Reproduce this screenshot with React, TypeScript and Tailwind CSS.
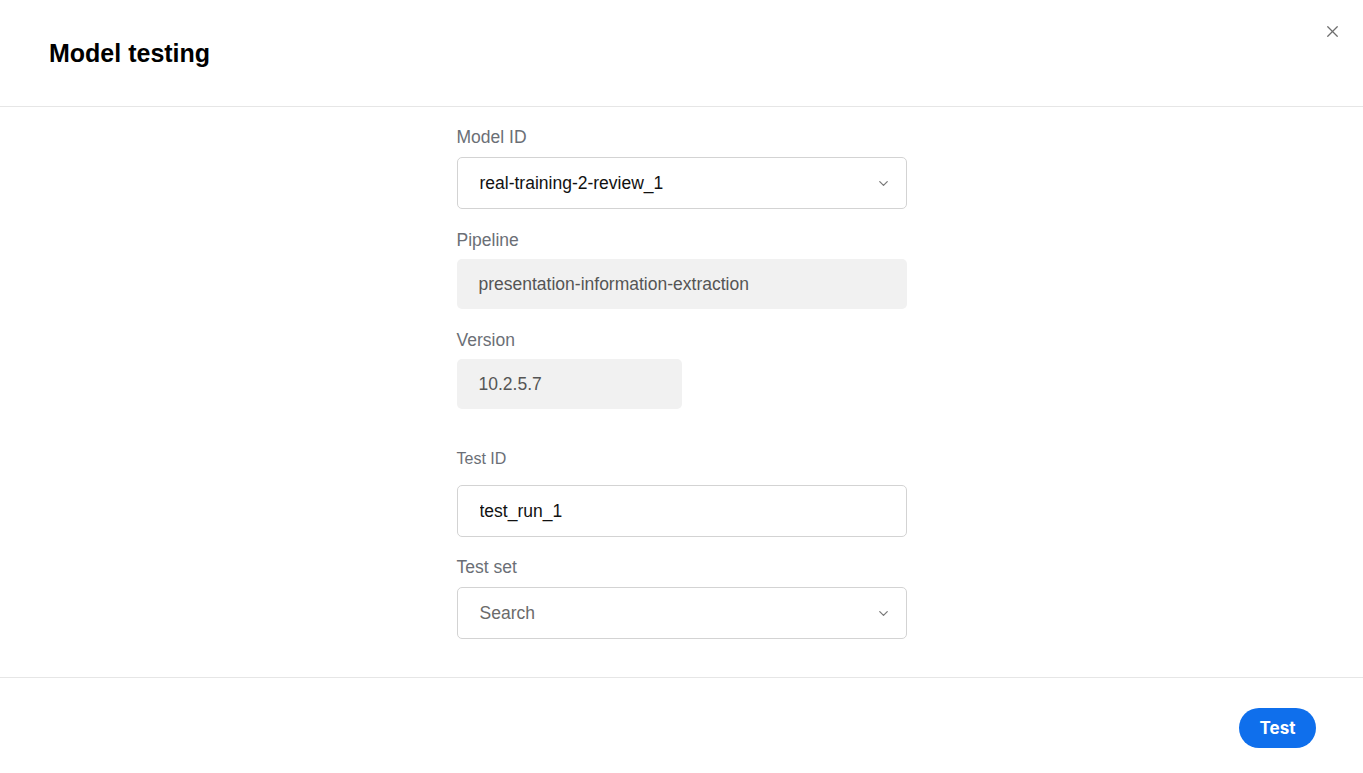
import React, { useState } from 'react';
import { X, ChevronDown } from 'lucide-react';

const font = { fontFamily: '"Liberation Sans", Arial, sans-serif' };

function FieldLabel({ children, small }: { children: React.ReactNode; small?: boolean }) {
  return (
    <div className={`${small ? 'text-[16px]' : 'text-[17.5px]'} leading-[20px] text-[#6b6f76]`}>{children}</div>
  );
}

function SelectBox({ value, placeholder }: { value?: string; placeholder?: string }) {
  return (
    <div className="flex h-[52px] w-full items-center justify-between rounded-[5px] border border-[#d3d3d3] bg-white pl-[22px] pr-[15px]">
      {value ? (
        <span className="text-[17.5px] text-[#111]">{value}</span>
      ) : (
        <span className="text-[17.5px] text-[#6b6b6b]">{placeholder}</span>
      )}
      <ChevronDown className="h-[15px] w-[15px] text-[#7a7a7a]" strokeWidth={2} />
    </div>
  );
}

function ReadOnlyBox({ value, className = '' }: { value: string; className?: string }) {
  return (
    <div className={`flex h-[50px] items-center rounded-[5px] bg-[#f1f1f1] pl-[22px] text-[17.5px] text-[#555] ${className}`}>
      {value}
    </div>
  );
}

export default function App() {
  const [testId, setTestId] = useState('test_run_1');

  return (
    <div className="flex h-[773px] w-full flex-col bg-white" style={font}>
      <div className="relative flex h-[107px] shrink-0 items-center border-b border-[#e6e6e6] px-[49px]">
        <h1 className="text-[25px] font-bold leading-none text-black">Model testing</h1>
        <button className="absolute right-[21px] top-[22px] text-[#6e6e6e]">
          <X className="h-[19px] w-[19px]" strokeWidth={1.6} />
        </button>
      </div>

      <div className="flex h-[570px] shrink-0 justify-center pt-[20px]">
        <div className="flex w-[450px] flex-col">
          <FieldLabel>Model ID</FieldLabel>
          <div className="mt-[10px]">
            <SelectBox value="real-training-2-review_1" />
          </div>

          <div className="mt-[21px]">
            <FieldLabel>Pipeline</FieldLabel>
          </div>
          <ReadOnlyBox value="presentation-information-extraction" className="mt-[9px] w-full" />

          <div className="mt-[21px]">
            <FieldLabel>Version</FieldLabel>
          </div>
          <ReadOnlyBox value="10.2.5.7" className="mt-[9px] w-[225px]" />

          <div className="mt-[40px]">
            <FieldLabel small>Test ID</FieldLabel>
          </div>
          <input
            value={testId}
            onChange={(e) => setTestId(e.target.value)}
            className="mt-[16px] h-[52px] w-full rounded-[5px] border border-[#d3d3d3] bg-white pl-[22px] text-[17.5px] text-[#111] outline-none"
          />

          <div className="mt-[20px]">
            <FieldLabel>Test set</FieldLabel>
          </div>
          <div className="mt-[10px]">
            <SelectBox placeholder="Search" />
          </div>
        </div>
      </div>

      <div className="flex flex-1 items-start justify-end border-t border-[#e6e6e6] pr-[47px] pt-[30px]">
        <button
          className="h-[40px] w-[77px] rounded-full bg-[#0f6fec] pt-[1px] text-[17px] font-bold text-white"
          style={{ fontFamily: 'Inter, "Liberation Sans", sans-serif' }}
        >
          Test
        </button>
      </div>
    </div>
  );
}
